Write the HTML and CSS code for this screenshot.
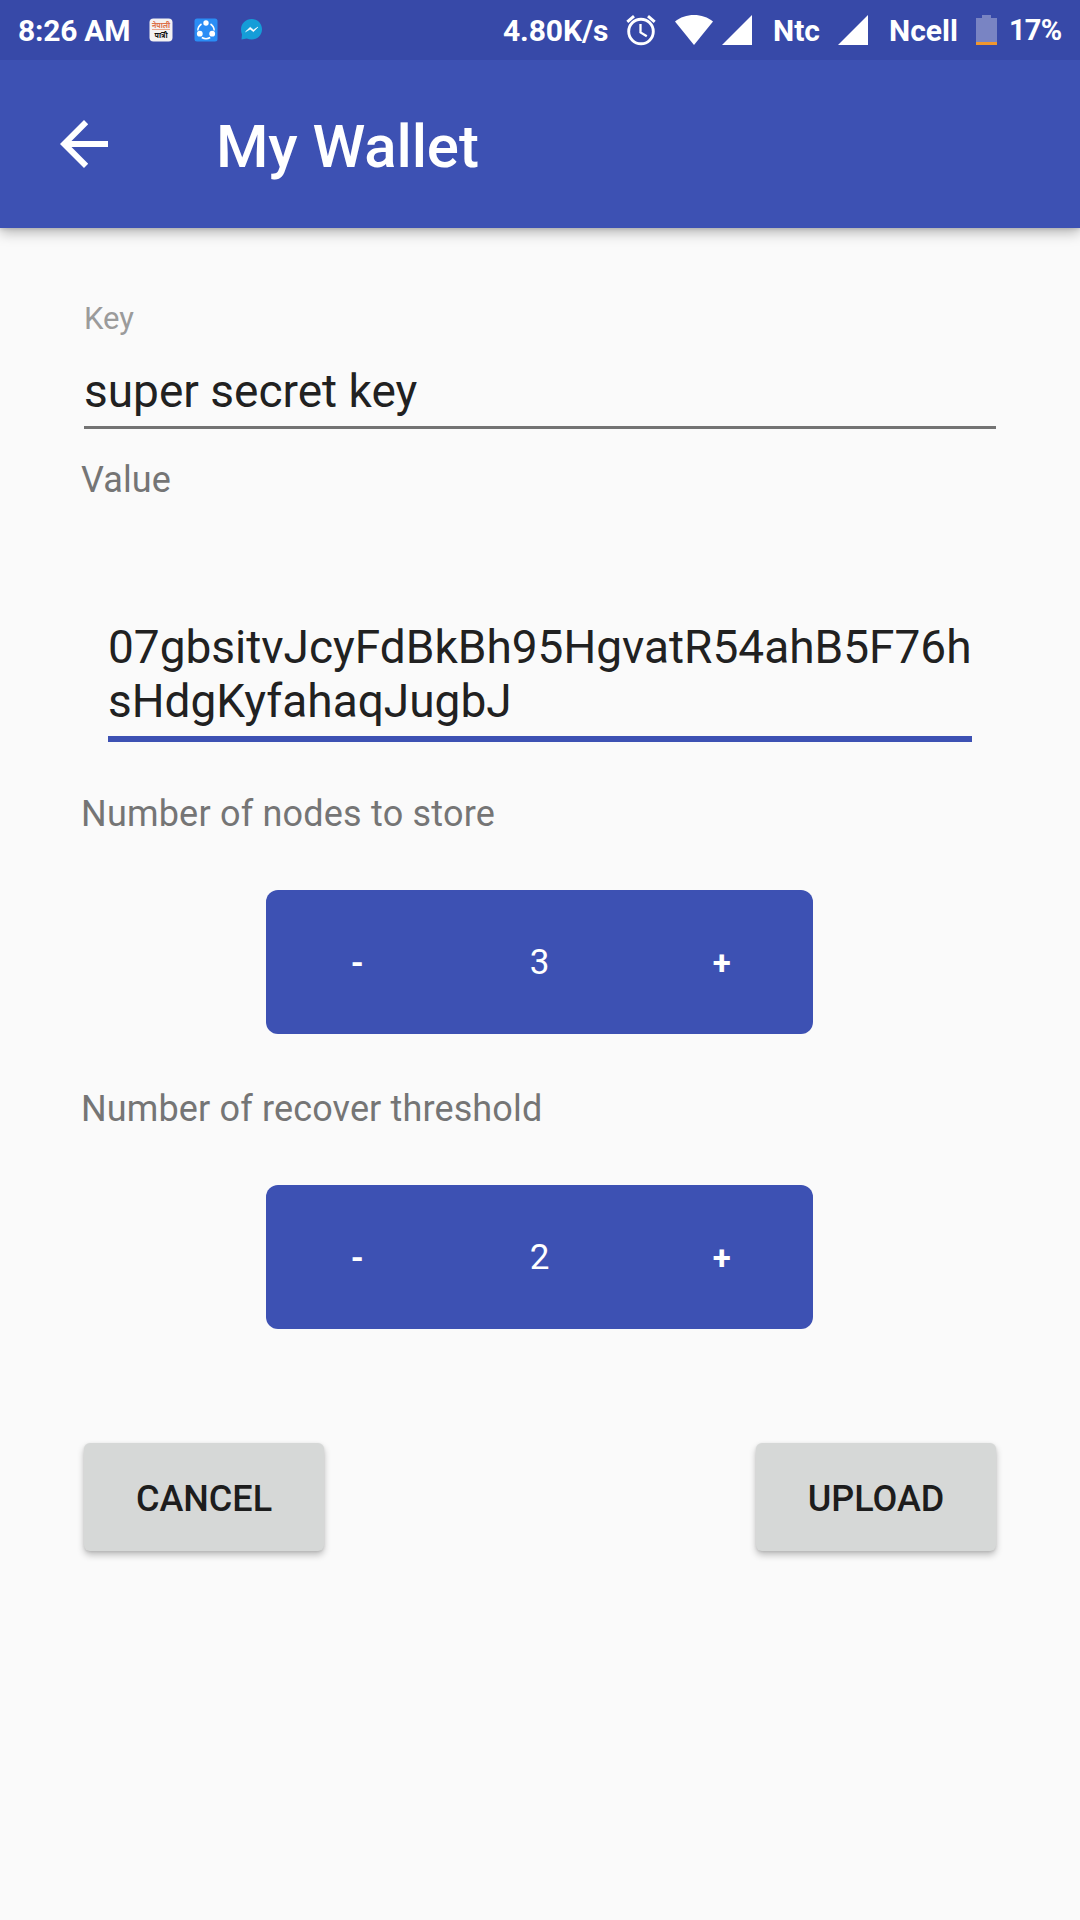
FILE: index.html
```html
<!DOCTYPE html>
<html lang="en">
<head>
<meta charset="utf-8">
<title>My Wallet</title>
<link rel="stylesheet" href="styles.css">
</head>
<body>
<div class="status">
  <span class="st clock">8:26 AM</span>
  <svg class="i-cal" width="24" height="24" viewBox="0 0 24 24">
    <rect x=".5" y=".5" width="23" height="23" rx="4" fill="#f4f1f2"/>
    <text class="deva" x="12" y="9.5" text-anchor="middle" textLength="18" lengthAdjust="spacingAndGlyphs" fill="#dd7048">नेपाली</text>
    <path d="M3 11.5h18" stroke="#e9a58b" stroke-width="1"/>
    <text class="deva" x="12" y="20" text-anchor="middle" textLength="13" lengthAdjust="spacingAndGlyphs" fill="#111">पात्रो</text>
  </svg>
  <svg class="i-share" width="24" height="24" viewBox="0 0 24 24">
    <rect x=".5" y=".5" width="23" height="23" rx="2.5" fill="#2a8df5"/>
    <path d="M16.500 6A8.200 8.200 0 0 1 20.200 12.500M3.800 12.500A8.200 8.200 0 0 1 7.500 6M7.800 19.500A8.200 8.200 0 0 0 16.200 19.500" fill="none" stroke="#fff" stroke-width="1.500"/>
    <circle cx="12" cy="5" r="2.700" fill="#fff"/>
    <circle cx="5.800" cy="15.700" r="2.900" fill="#fff"/>
    <circle cx="18.200" cy="15.700" r="2.900" fill="#fff"/>
  </svg>
  <svg class="i-msg" width="23" height="23" viewBox="0 0 23 23">
    <path d="M11.7 1C17.600 1 22 5.600 22 11.300S17.600 21.500 11.700 21.500C10 21.500 8.300 21.200 6.800 20.500L1.500 21.600 2 16.500C1.300 14.900 1 13.200 1 11.300 1 5.600 5.800 1 11.700 1z" fill="#159dd8"/>
    <path d="M5.500 13.800l4.700-4.600 3.300 2.700 4.500-2.900-4.500 4.700-3.300-2.500z" fill="#fff" stroke="#fff" stroke-width=".5"/>
  </svg>
  <span class="st speed">4.80K/s</span>
  <svg class="i-alarm" width="30" height="32" viewBox="0 0 30 32">
    <g fill="none" stroke="#fff">
      <circle cx="15" cy="17.500" r="12.300" stroke-width="2.900"/>
      <path d="M14.500 10v8.400l6.300 3.800" stroke-width="2.300"/>
      <path d="M1.300 7.800L8 2.100M28.700 7.800L22 2.100" stroke-width="3"/>
    </g>
  </svg>
  <svg class="i-wifi" width="38" height="30" viewBox="0 0 38 30"><path d="M0 6.500C5.200 2.300 11.800 0 19 0s13.800 2.300 19 6.500L19 30z" fill="#fff"/></svg>
  <svg class="i-sig1" width="30" height="30" viewBox="0 0 30 30"><path d="M30 0v30H0z" fill="#fff"/></svg>
  <span class="st ntc">Ntc</span>
  <svg class="i-sig2" width="30" height="30" viewBox="0 0 30 30"><path d="M30 0v30H0z" fill="#fff"/></svg>
  <span class="st ncell">Ncell</span>
  <svg class="i-batt" width="21" height="30" viewBox="0 0 21 30"><path d="M6 0h9v3h6v24H0V3h6z" fill="#7984c3"/><path d="M0 27h21v3H0z" fill="#f0962e"/></svg>
  <span class="st pct">17%</span>
</div>
<header class="toolbar">
  <svg class="back" width="48" height="48" viewBox="0 0 48 48"><path d="M48 21H11.500L28.200 4.200 24 0 0 24l24 24 4.200-4.200L11.500 27H48z" fill="#fff"/></svg>
  <h1 class="title">My Wallet</h1>
</header>
<main class="form">
  <label class="hint">Key</label>
  <div class="input key-input">super secret key</div>
  <div class="label value-label">Value</div>
  <div class="input value-input"><div>07gbsitvJcyFdBkBh95HgvatR54ahB5F76h</div><div>sHdgKyfahaqJugbJ</div></div>
  <div class="label nodes-label">Number of nodes to store</div>
  <div class="stepper"><b>-</b><span>3</span><b>+</b></div>
  <div class="label threshold-label">Number of recover threshold</div>
  <div class="stepper"><b>-</b><span>2</span><b>+</b></div>
  <div class="actions"><button class="btn">CANCEL</button><button class="btn">UPLOAD</button></div>
</main>
</body>
</html>
```
FILE: styles.css
```css
* { box-sizing: border-box; }
body {
  margin: 0;
  width: 1080px;
  height: 1920px;
  overflow: hidden;
  background: #fafafa;
  color: #212121;
  font-family: Roboto, sans-serif;
}
svg { display: block; flex: none; }
.status {
  position: relative;
  z-index: 1;
  display: flex;
  align-items: flex-start;
  height: 60px;
  background: #3749a8;
  color: #fff;
}
.st {
  flex: none;
  padding-top: 1px;
  font-size: 30px;
  font-weight: 700;
  line-height: 60px;
  height: 60px;
  white-space: nowrap;
}
.clock { width: 132px; padding-left: 18px; letter-spacing: -.25px; }
.i-cal { margin: 18px 0 0 17px; }
.i-share { margin: 18px 0 0 21px; }
.i-msg { margin: 18px 0 0 22px; }
.speed { margin-left: 240px; width: 109px; letter-spacing: -.1px; }
.i-alarm { margin: 14px 0 0 14px; }
.i-wifi { margin: 15px 0 0 19px; }
.i-sig1 { margin: 15px 0 0 9px; }
.ntc { margin-left: 21px; width: 49px; }
.i-sig2 { margin: 15px 0 0 16px; }
.ncell { margin-left: 21px; width: 71px; }
.i-batt { margin: 15px 0 0 16px; }
.pct { margin-left: 12px; padding-top: 0; font-size: 29px; letter-spacing: -.8px; }
.deva { font: 700 8px "Noto Sans", sans-serif; }
.toolbar {
  display: flex;
  align-items: center;
  height: 168px;
  padding-left: 60px;
  background: #3d51b3;
  color: #fff;
  box-shadow: 0 5px 12px rgba(0, 0, 0, .26), 0 1px 4px rgba(0, 0, 0, .14);
}
.title {
  margin: 6px 0 0 108px;
  font-size: 60px;
  font-weight: 500;
  line-height: 72px;
  letter-spacing: -.1px;
}
.form { padding: 73px 81px 0; display: flex; flex-direction: column; }
.hint {
  margin-left: 3px;
  font-size: 31px;
  line-height: 36px;
  color: #9b9b9b;
}
.input { font-size: 46px; line-height: 54px; white-space: nowrap; }
.key-input {
  margin: 27px 3px 0;
  height: 65px;
  border-bottom: 3px solid #737373;
}
.label { font-size: 36px; line-height: 42px; color: #757575; letter-spacing: .14px; }
.value-label { margin-top: 30px; }
.value-input {
  margin: 119px 27px 0;
  height: 122px;
  border-bottom: 6px solid #3d51b3;
}
.nodes-label { margin-top: 51px; letter-spacing: .2px; }
.stepper {
  display: grid;
  grid-template-columns: repeat(3, 1fr);
  align-self: center;
  width: 547px;
  height: 144px;
  margin: 55px 1px 0 0;
  padding-top: 1px;
  border-radius: 12px;
  background: #3d51b3;
  color: #fff;
  font-size: 35px;
  line-height: 144px;
  text-align: center;
}
.threshold-label { margin-top: 54px; }
.stepper b { font-size: 33px; font-weight: 700; }
.actions { display: flex; justify-content: space-between; margin: 114px 3px 0; }
.btn {
  width: 240px;
  height: 108px;
  border: 0;
  padding: 4px 0 0;
  border-radius: 6px;
  background: #d6d8d7;
  color: #1d1d1d;
  font: 500 36px/42px Roboto, sans-serif;
  box-shadow: 0 4px 7px rgba(0, 0, 0, .24), 0 1px 3px rgba(0, 0, 0, .1);
}
```
